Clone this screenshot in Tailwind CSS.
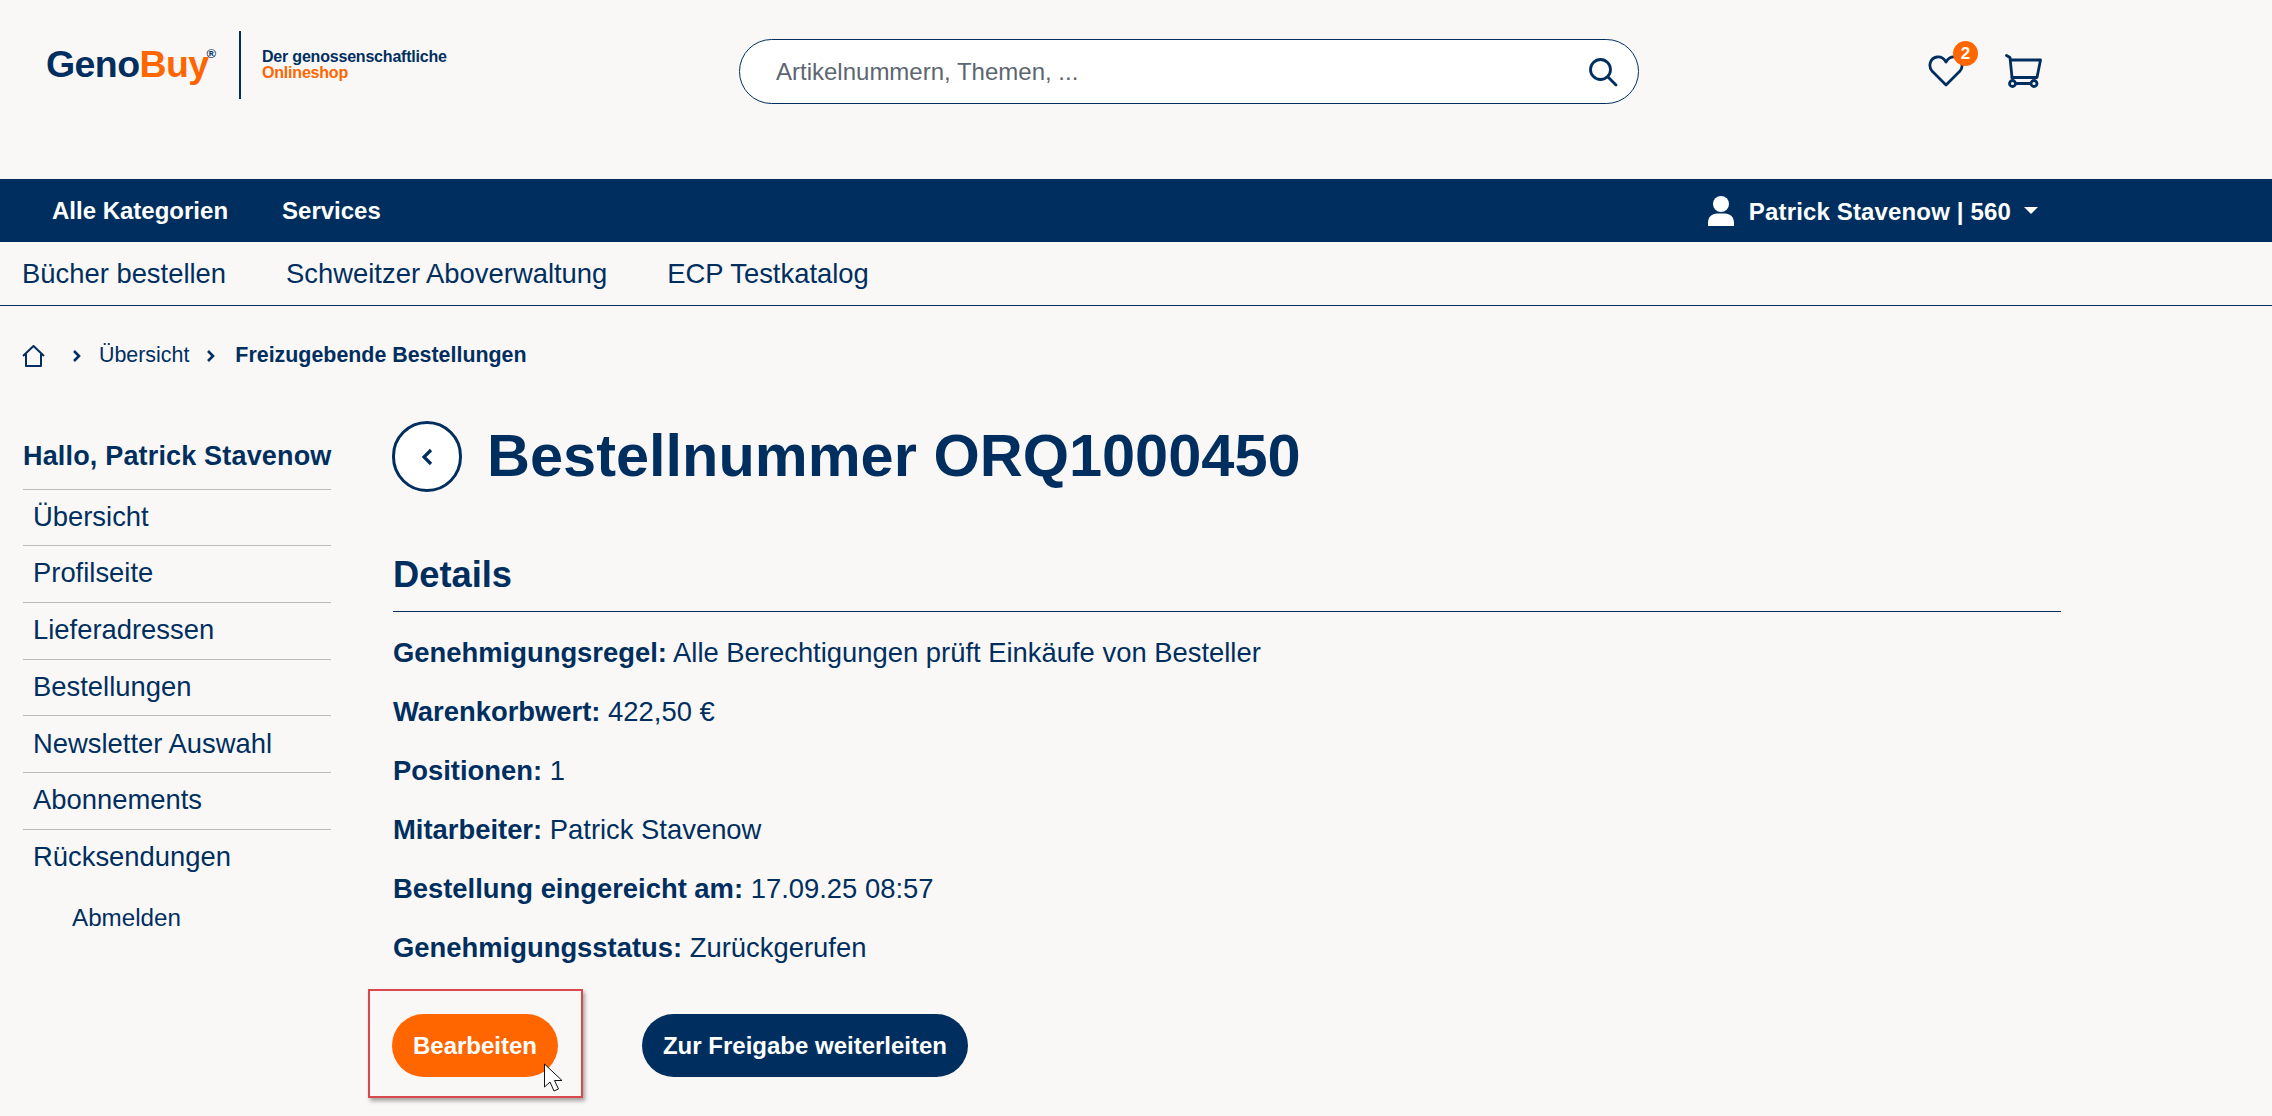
<!DOCTYPE html>
<html lang="de">
<head>
    <meta charset="UTF-8">
    <title>GenoBuy - Bestellnummer ORQ1000450</title>
    <script src="https://cdn.jsdelivr.net/npm/@tailwindcss/browser@4"></script>
</head>
<body class="bg-[#faf8f7] text-[#002f5f] font-['Liberation_Sans',Arial,sans-serif] h-[1116px] overflow-hidden relative">

    <!-- Header -->
    <header class="h-[179px] flex items-start relative">
        <div class="w-[739px] flex items-start pt-[31px] pl-[46px]">
            <div class="w-[193px] flex items-start pt-[10px] text-[37.5px] leading-[46px] font-bold tracking-[-0.6px]">
                <span>Geno</span><span class="text-[#ff6600]">Buy</span><span class="text-[13px] leading-[14px] mt-[6px] -ml-[2px] tracking-normal">®</span>
            </div>
            <div class="w-[2px] h-[68px] bg-[#002f5f]"></div>
            <div class="ml-[21px] pt-[18px] text-[16px] leading-[16px] font-bold tracking-[-0.2px]">
                <div>Der genossenschaftliche</div>
                <div class="text-[#ff6600]">Onlineshop</div>
            </div>
        </div>
        <div class="mt-[39px] w-[900px] h-[65px] bg-white border border-[#002f5f] rounded-[33px] flex items-center pl-[36px] pr-[20px]">
            <span class="flex-1 text-[24px] text-[#5d6670]">Artikelnummern, Themen, ...</span>
            <svg class="w-[30px] h-[30px]" viewBox="0 0 30 30" fill="none" stroke="#002f5f" stroke-width="2.8" stroke-linecap="round"><circle cx="12.5" cy="12.5" r="10"/><path d="M20 20l8 8"/></svg>
        </div>
        <div class="ml-[289px] mt-[54px] relative">
            <svg class="w-[36px] h-[34px]" viewBox="0 0 36 34" fill="none" stroke="#002f5f" stroke-width="2.8" stroke-linejoin="round"><path d="M18 31L4 17C0 12 2 4 9 3c4-.5 7 1.500 9 5 2-3.500 5-5.500 9-5 7 1 9 9 5 14z"/></svg>
            <span class="absolute left-[25px] top-[-13px] w-[25px] h-[25px] rounded-full bg-[#ff6600] text-white text-[17px] font-bold flex items-center justify-center">2</span>
        </div>
        <svg class="ml-[41px] mt-[54px] w-[38px] h-[34px]" viewBox="0 0 38 34" fill="none" stroke="#002f5f" stroke-width="2.8" stroke-linecap="round" stroke-linejoin="round"><path d="M1.500 1.500l3.500 2 2 20"/><path d="M5.500 6h30l-3.500 17.500H7"/><path d="M10.500 29.500h15"/><circle cx="7.500" cy="29.500" r="3"/><circle cx="29" cy="29.500" r="3"/></svg>
    </header>

    <!-- Main nav -->
    <nav class="h-[63px] bg-[#002f5f] text-white font-bold flex items-center pl-[52px] pr-[234px]">
        <a class="text-[24px]">Alle Kategorien</a>
        <a class="text-[24px] ml-[54px]">Services</a>
        <div class="ml-auto flex items-center">
            <svg class="w-[26px] h-[30px] mt-[1px]" viewBox="0 0 26 30" fill="#fff"><circle cx="13" cy="8" r="8"/><path d="M0 30v-3c0-6 4-9.500 9-9.500h8c5 0 9 3.500 9 9.500v3z"/></svg>
            <span class="ml-[15px] text-[24px] tracking-[0.15px] mt-[2px]">Patrick Stavenow | 560</span>
            <span class="ml-[13px] w-0 h-0 border-x-[7px] border-x-transparent border-t-[7px] border-t-white"></span>
        </div>
    </nav>

    <!-- Sub nav -->
    <div class="h-[64px] border-b border-[#002f5f] flex items-center pl-[22px] gap-[60px] text-[27.4px]">
        <a>Bücher bestellen</a>
        <a>Schweitzer Aboverwaltung</a>
        <a>ECP Testkatalog</a>
    </div>

    <!-- Breadcrumb -->
    <div class="h-[100px] flex items-center pl-[22px] pb-[1px] text-[21.4px]">
        <svg class="w-[23px] h-[22px]" viewBox="0 0 23 22" fill="none" stroke="#002f5f" stroke-width="2" stroke-linejoin="round"><path d="M1 11L11.500 1 22 11M4 9v12h15V9"/></svg>
        <svg class="ml-[27px] w-[10px] h-[14px]" viewBox="0 0 10 14" fill="none" stroke="#002f5f" stroke-width="2.600"><path d="M2 2l5 5-5 5"/></svg>
        <span class="ml-[17px]">Übersicht</span>
        <svg class="ml-[17px] w-[10px] h-[14px]" viewBox="0 0 10 14" fill="none" stroke="#002f5f" stroke-width="2.600"><path d="M2 2l5 5-5 5"/></svg>
        <span class="ml-[19px] font-bold">Freizugebende Bestellungen</span>
    </div>

    <div class="flex items-start pl-[23px]">
        <!-- Sidebar -->
        <aside class="w-[308px] pt-[34px]">
            <div class="h-[49.5px] border-b border-[#bbbbbb] text-[27px] leading-[32px] font-bold tracking-[0.17px] whitespace-nowrap">Hallo, Patrick Stavenow</div>
            <ul class="text-[27.4px]">
                <li class="h-[56.7px] pl-[10px] pb-[2px] flex items-center border-b border-[#bbbbbb]">Übersicht</li>
                <li class="h-[56.7px] pl-[10px] pb-[2px] flex items-center border-b border-[#bbbbbb]">Profilseite</li>
                <li class="h-[56.7px] pl-[10px] pb-[2px] flex items-center border-b border-[#bbbbbb]">Lieferadressen</li>
                <li class="h-[56.7px] pl-[10px] pb-[2px] flex items-center border-b border-[#bbbbbb]">Bestellungen</li>
                <li class="h-[56.7px] pl-[10px] pb-[2px] flex items-center border-b border-[#bbbbbb]">Newsletter Auswahl</li>
                <li class="h-[56.7px] pl-[10px] pb-[2px] flex items-center border-b border-[#bbbbbb]">Abonnements</li>
                <li class="h-[56.7px] pl-[10px] pb-[2px] flex items-center">Rücksendungen</li>
            </ul>
            <div class="pl-[49px] pt-[14px] text-[24.2px]">Abmelden</div>
        </aside>

        <!-- Content -->
        <main class="ml-[62px] w-[1668px] pt-[15px]">
            <div class="flex items-center -ml-[1px]">
                <div class="w-[70px] h-[71px] rounded-full border-[3px] border-[#002f5f] bg-white flex items-center justify-center">
                    <svg class="w-[12px] h-[18px]" viewBox="0 0 12 18" fill="none" stroke="#002f5f" stroke-width="3.200"><path d="M10 2L3 9l7 7"/></svg>
                </div>
                <h1 class="ml-[25px] -mt-[2px] text-[59.5px] leading-[70px] font-bold">Bestellnummer ORQ1000450</h1>
            </div>
            <h2 class="mt-[55px] h-[65px] border-b border-[#002f5f] text-[36.3px] leading-[55px] font-bold">Details</h2>
            <div class="mt-[10.5px] text-[27.4px] leading-[59px]">
                <p><b>Genehmigungsregel:</b> Alle Berechtigungen prüft Einkäufe von Besteller</p>
                <p><b>Warenkorbwert:</b> 422,50 €</p>
                <p><b>Positionen:</b> 1</p>
                <p><b>Mitarbeiter:</b> Patrick Stavenow</p>
                <p><b>Bestellung eingereicht am:</b> 17.09.25 08:57</p>
                <p><b>Genehmigungsstatus:</b> Zurückgerufen</p>
            </div>
            <div class="mt-[37.5px] -ml-[1px] flex items-center">
                <button class="w-[166px] h-[63px] rounded-[32px] bg-[#ff6600] text-white text-[24px] font-bold">Bearbeiten</button>
                <button class="ml-[84px] w-[326px] h-[63px] rounded-[32px] bg-[#002f5f] text-white text-[24px] font-bold">Zur Freigabe weiterleiten</button>
            </div>
        </main>
    </div>

    <!-- Annotation on the screenshot -->
    <div class="absolute left-[368px] top-[989px] w-[215px] h-[109px] border-2 border-[#d9484c] shadow-[2px_3px_4px_rgba(0,0,0,0.35)]"></div>
    <svg class="absolute left-[543px] top-[1063px] w-[20px] h-[30px]" viewBox="0 0 20 30" fill="#fff" stroke="#111" stroke-width="1" stroke-linejoin="round"><path d="M1.500 1v23l5.500-5 4 9 4.500-2-4-8.500h7.500z"/></svg>
</body>
</html>
